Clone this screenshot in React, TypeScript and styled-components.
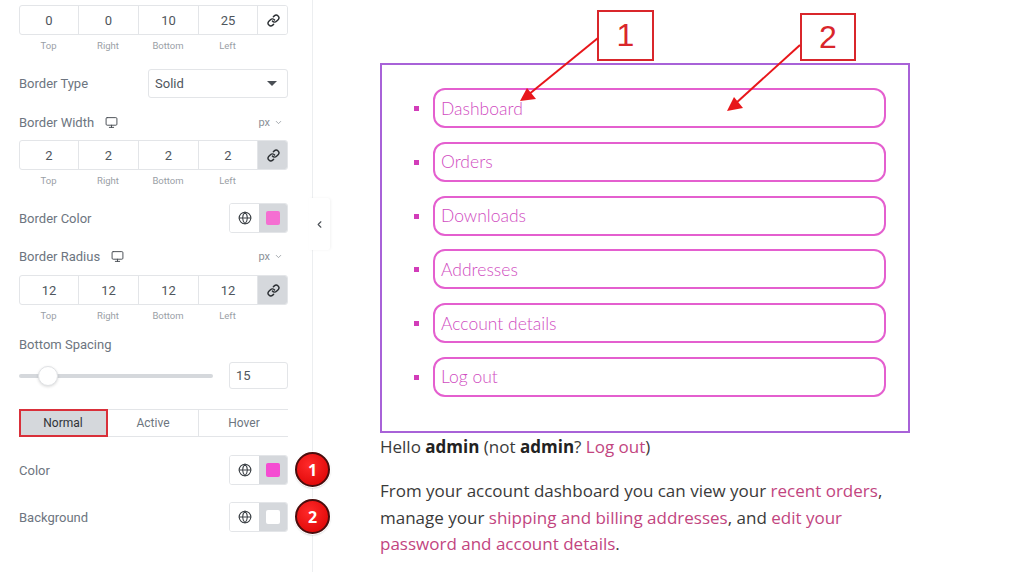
import styled, { createGlobalStyle } from "styled-components";
import { Globe, Link, Monitor, ChevronDown, ChevronLeft } from "lucide-react";

const GlobalStyle = createGlobalStyle`
  html, body {
    margin: 0;
    padding: 0;
    background: #ffffff;
  }
  body {
    font-family: Roboto, "Liberation Sans", sans-serif;
  }
`;

const navItems = [
  "Dashboard",
  "Orders",
  "Downloads",
  "Addresses",
  "Account details",
  "Log out",
];

function Dimensions({ values, linked }: { values: string[]; linked?: boolean }) {
  return (
    <>
      <DimRow>
        {values.map((v, i) => (
          <DimCell key={i}>{v}</DimCell>
        ))}
        <LinkCell $active={linked}>
          <Link size={13} strokeWidth={2.6} color="#2b2f33" />
        </LinkCell>
      </DimRow>
      <DimLabels>
        <span>Top</span>
        <span>Right</span>
        <span>Bottom</span>
        <span>Left</span>
      </DimLabels>
    </>
  );
}

function ColorPicker({ swatch }: { swatch: string }) {
  return (
    <Picker>
      <PickerGlobe>
        <Globe size={14} strokeWidth={1.8} color="#3a3f44" />
      </PickerGlobe>
      <PickerSwatch>
        <Swatch $color={swatch} />
      </PickerSwatch>
    </Picker>
  );
}

export default function App() {
  return (
    <Page>
      <GlobalStyle />
      <Panel>
        <Dimensions values={["0", "0", "10", "25"]} />

        <ControlRow $mt={13} $h={29}>
          <Label>Border Type</Label>
          <Select>
            Solid
            <Caret />
          </Select>
        </ControlRow>

        <ControlRow $mt={14} $h={20}>
          <LabelGroup>
            <Label>Border Width</Label>
            <Monitor size={13} strokeWidth={1.8} color="#4a4f55" />
          </LabelGroup>
          <Units>
            px <ChevronDown size={9} strokeWidth={2} />
          </Units>
        </ControlRow>
        <Spacer $h={8} />
        <Dimensions values={["2", "2", "2", "2"]} linked />

        <ControlRow $mt={12} $h={30}>
          <Label>Border Color</Label>
          <ColorPicker swatch="#f56fd2" />
        </ControlRow>

        <ControlRow $mt={13} $h={20}>
          <LabelGroup>
            <Label>Border Radius</Label>
            <Monitor size={13} strokeWidth={1.8} color="#4a4f55" />
          </LabelGroup>
          <Units>
            px <ChevronDown size={9} strokeWidth={2} />
          </Units>
        </ControlRow>
        <Spacer $h={9} />
        <Dimensions values={["12", "12", "12", "12"]} linked />

        <ControlRow $mt={8} $h={20}>
          <Label>Bottom Spacing</Label>
        </ControlRow>
        <ControlRow $mt={8} $h={27}>
          <SliderTrack>
            <SliderThumb />
          </SliderTrack>
          <NumberInput>15</NumberInput>
        </ControlRow>

        <Tabs>
          <Tab $active>Normal</Tab>
          <Tab>Active</Tab>
          <Tab>Hover</Tab>
        </Tabs>

        <ControlRow $mt={18} $h={30}>
          <Label>Color</Label>
          <ColorPicker swatch="#f54cd2" />
          <Badge>1</Badge>
        </ControlRow>
        <ControlRow $mt={17} $h={30}>
          <Label>Background</Label>
          <ColorPicker swatch="#ffffff" />
          <Badge>2</Badge>
        </ControlRow>
      </Panel>

      <Handle>
        <ChevronLeft size={11} strokeWidth={2.4} color="#4a4f55" />
      </Handle>

      <Main>
        <NavBox>
          <NavList>
            {navItems.map((item) => (
              <NavItem key={item}>
                <NavLink>{item}</NavLink>
              </NavItem>
            ))}
          </NavList>
        </NavBox>
        <Greeting>
          Hello <b>admin</b> (not <b>admin</b>? <A>Log out</A>)
        </Greeting>
        <Para>
          From your account dashboard you can view your <A>recent orders</A>,
          <br />
          manage your <A>shipping and billing addresses</A>, and{" "}
          <A>edit your</A>
          <br />
          <A>password and account details</A>.
        </Para>

        <Callout $left={284} $top={10} $w={57} $h={51}>
          1
        </Callout>
        <Callout $left={487} $top={13} $w={56} $h={48}>
          2
        </Callout>
      </Main>

      <Arrows width="1024" height="572" viewBox="0 0 1024 572">
        <path d="M598 38 L528 95" stroke="#e8161a" strokeWidth="2" />
        <path d="M520 101 L536 99 L527 88 Z" fill="#e8161a" />
        <path d="M800 45 L735 104" stroke="#e8161a" strokeWidth="2" />
        <path d="M727 111 L743 108 L734 97 Z" fill="#e8161a" />
      </Arrows>
    </Page>
  );
}

const Page = styled.div`
  position: relative;
  display: flex;
  width: 1024px;
  height: 572px;
  overflow: hidden;
  background: #ffffff;
`;

const Panel = styled.div`
  width: 313px;
  flex-shrink: 0;
  box-sizing: border-box;
  padding: 5px 0 0 19px;
  border-right: 1px solid #eceef0;
  display: flex;
  flex-direction: column;
`;

const DimRow = styled.div`
  display: grid;
  grid-template-columns: 59px 60px 60px 59px 31px;
  width: 269px;
  height: 30px;
  box-sizing: border-box;
  border: 1px solid #e3e5e8;
  border-radius: 3px;
  overflow: hidden;
`;

const DimCell = styled.div`
  display: flex;
  align-items: center;
  justify-content: center;
  border-right: 1px solid #e3e5e8;
  font-size: 13px;
  color: #4f565d;
`;

const LinkCell = styled.div<{ $active?: boolean }>`
  display: flex;
  align-items: center;
  justify-content: center;
  background: ${(p) => (p.$active ? "#d5d8dc" : "#ffffff")};
`;

const DimLabels = styled.div`
  display: grid;
  grid-template-columns: 59px 60px 60px 59px;
  height: 21px;
  align-items: center;
  font-size: 9.5px;
  color: #9aa0a6;
  text-align: center;
`;

const ControlRow = styled.div<{ $mt: number; $h: number }>`
  position: relative;
  display: flex;
  align-items: center;
  justify-content: space-between;
  width: 269px;
  height: ${(p) => p.$h}px;
  margin-top: ${(p) => p.$mt}px;
`;

const Spacer = styled.div<{ $h: number }>`
  height: ${(p) => p.$h}px;
`;

const Label = styled.span`
  font-size: 13px;
  color: #6d7580;
`;

const LabelGroup = styled.div`
  display: flex;
  align-items: center;
  gap: 11px;
`;

const Units = styled.span`
  display: flex;
  align-items: center;
  gap: 4px;
  margin-right: 5px;
  font-size: 11px;
  color: #8a9097;
`;

const Select = styled.div`
  position: relative;
  width: 140px;
  height: 29px;
  box-sizing: border-box;
  border: 1px solid #e3e5e8;
  border-radius: 3px;
  padding: 0 6px;
  display: flex;
  align-items: center;
  justify-content: space-between;
  font-size: 13px;
  color: #4f565d;
`;

const Caret = styled.span`
  width: 0;
  height: 0;
  margin-right: 4px;
  border-left: 5px solid transparent;
  border-right: 5px solid transparent;
  border-top: 5px solid #4a4f55;
`;

const Picker = styled.div`
  display: flex;
  width: 59px;
  height: 30px;
  margin-left: auto;
  box-sizing: border-box;
  border: 1px solid #e3e5e8;
  border-radius: 3px;
  overflow: hidden;
`;

const PickerGlobe = styled.div`
  width: 29px;
  display: flex;
  align-items: center;
  justify-content: center;
  background: #ffffff;
`;

const PickerSwatch = styled.div`
  flex: 1;
  display: flex;
  align-items: center;
  justify-content: center;
  background: #d5d8dc;
`;

const Swatch = styled.div<{ $color: string }>`
  width: 14px;
  height: 14px;
  border-radius: 2px;
  background: ${(p) => p.$color};
`;

const SliderTrack = styled.div`
  position: relative;
  width: 194px;
  height: 4px;
  border-radius: 2px;
  background: #d5d8dc;
`;

const SliderThumb = styled.div`
  position: absolute;
  left: 19px;
  top: -8px;
  width: 18px;
  height: 18px;
  border-radius: 50%;
  background: #ffffff;
  border: 1px solid #e0e2e5;
  box-shadow: 0 1px 3px rgba(0, 0, 0, 0.15);
`;

const NumberInput = styled.div`
  width: 59px;
  height: 27px;
  box-sizing: border-box;
  border: 1px solid #e3e5e8;
  border-radius: 3px;
  padding-left: 6px;
  display: flex;
  align-items: center;
  font-size: 13px;
  color: #4f565d;
`;

const Tabs = styled.div`
  display: grid;
  grid-template-columns: 88px 91px 90px;
  width: 269px;
  height: 28px;
  margin-top: 20px;
  box-sizing: border-box;
  border: 1px solid #e3e5e8;
`;

const Tab = styled.div<{ $active?: boolean }>`
  display: flex;
  align-items: center;
  justify-content: center;
  font-size: 12px;
  color: ${(p) => (p.$active ? "#2f3338" : "#6d7580")};
  background: ${(p) => (p.$active ? "#d5d8dc" : "#ffffff")};
  border-right: 1px solid #e3e5e8;
  box-sizing: border-box;
  margin: ${(p) => (p.$active ? "-1px 0 -1px -1px" : "0")};
  outline: ${(p) => (p.$active ? "2px solid #d9303a" : "none")};
  outline-offset: -2px;
  &:last-child {
    border-right: none;
  }
`;

const Badge = styled.div`
  position: absolute;
  left: 276px;
  top: -3px;
  width: 35px;
  height: 35px;
  border-radius: 50%;
  box-sizing: border-box;
  border: 2px solid #4a0d0d;
  background: radial-gradient(circle at 40% 35%, #ff2a2a, #d80000);
  box-shadow: 0 0 0 1px #ffffff, 0 1px 2px rgba(0, 0, 0, 0.3);
  display: flex;
  align-items: center;
  justify-content: center;
  font-family: "Open Sans", "Liberation Sans", sans-serif;
  font-weight: 700;
  font-size: 16px;
  color: #ffffff;
`;

const Handle = styled.div`
  position: absolute;
  left: 309px;
  top: 198px;
  width: 21px;
  height: 52px;
  background: #ffffff;
  border-radius: 0 3px 3px 0;
  box-shadow: 1px 0 3px rgba(0, 0, 0, 0.05);
  display: flex;
  align-items: center;
  justify-content: center;
`;

const Main = styled.div`
  position: relative;
  flex: 1;
  padding: 63px 0 0 67px;
  font-family: "Open Sans", "Noto Sans", sans-serif;
`;

const NavBox = styled.div`
  width: 530px;
  height: 370px;
  box-sizing: border-box;
  border: 2px solid #a862d8;
`;

const NavList = styled.ul`
  list-style: none;
  margin: 0;
  padding: 23px 22px 0 51px;
  display: flex;
  flex-direction: column;
  gap: 13.8px;
`;

const NavItem = styled.li`
  position: relative;
  display: flex;
  &::before {
    content: "";
    position: absolute;
    left: -19px;
    top: 18px;
    width: 5px;
    height: 5px;
    background: #d23cb9;
  }
`;

const NavLink = styled.div`
  flex: 1;
  height: 40px;
  box-sizing: border-box;
  border: 2px solid #e45fcf;
  border-radius: 12px;
  padding-left: 6px;
  display: flex;
  align-items: center;
  font-family: Lato, "Noto Sans", sans-serif;
  font-weight: 300;
  font-size: 17.5px;
  color: #d04cbf;
`;

const Greeting = styled.p`
  margin: 0;
  line-height: 27px;
  font-size: 17px;
  color: #3a3a3a;
  b {
    font-weight: 700;
    color: #222;
  }
`;

const Para = styled.p`
  margin: 18px 0 0;
  line-height: 26.5px;
  font-size: 17px;
  color: #3a3a3a;
`;

const A = styled.span`
  color: #c2457f;
`;

const Callout = styled.div<{ $left: number; $top: number; $w: number; $h: number }>`
  position: absolute;
  left: ${(p) => p.$left}px;
  top: ${(p) => p.$top}px;
  width: ${(p) => p.$w}px;
  height: ${(p) => p.$h}px;
  box-sizing: border-box;
  border: 2px solid #d9262b;
  background: #ffffff;
  display: flex;
  align-items: center;
  justify-content: center;
  font-family: "Liberation Sans", Arial, sans-serif;
  font-size: 32px;
  color: #d9262b;
`;

const Arrows = styled.svg`
  position: absolute;
  left: 0;
  top: 0;
  pointer-events: none;
`;
